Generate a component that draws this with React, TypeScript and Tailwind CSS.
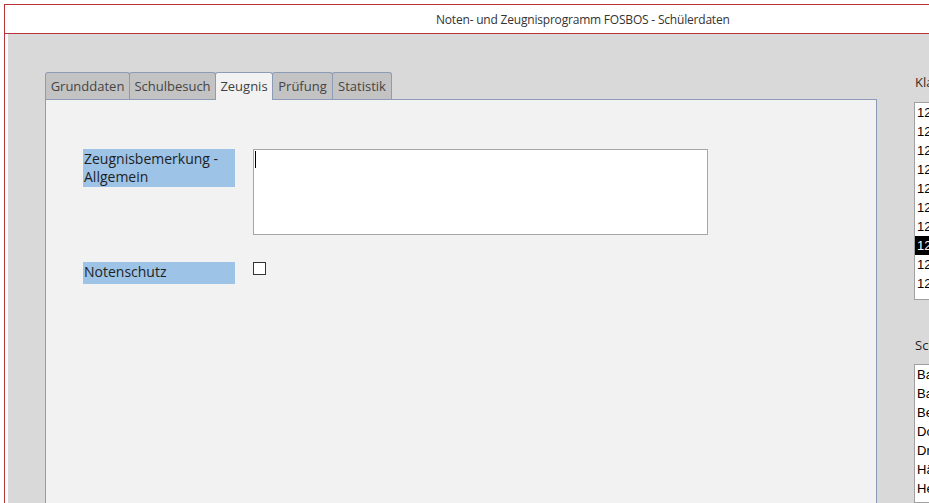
import React from "react";

const tabs = [
  { label: "Grunddaten", w: "w-[85px]", active: false },
  { label: "Schulbesuch", w: "w-[87px]", active: false },
  { label: "Zeugnis", w: "w-[58px]", active: true },
  { label: "Prüfung", w: "w-[61px]", active: false },
  { label: "Statistik", w: "w-[60px]", active: false },
];

const klassen = ["12A", "12B", "12C", "12D", "12E", "12F", "12G", "12H", "12I", "12K"];
const schueler = ["Bauer, Anna", "Baumann, Lukas", "Berger, Tim", "Dorn, Lea", "Dreher, Max", "Häusler, Jana", "Hertel, Paul"];

export default function App() {
  return (
    <div className="w-[929px] h-[503px] overflow-hidden bg-white pt-[4px] pl-[4px] font-['Open_Sans',sans-serif]">
      <div className="flex flex-col h-[499px] w-[1200px] border-t border-l border-[#b8333a]">
        {/* title bar */}
        <div className="h-[29px] shrink-0 border-b border-[#b8333a] flex items-center pl-[431px] pt-[1px] text-[12px] text-[#333333] tracking-[-0.2px]">
          Noten- und Zeugnisprogramm FOSBOS - Schülerdaten
        </div>
        {/* body */}
        <div className="flex-1 flex pl-[3px] bg-white min-h-0">
          <div className="flex-1 flex bg-[#d9d9d9] min-h-0">
            {/* left: tab control */}
            <div className="ml-[37px] w-[832px] flex flex-col pt-[38px]">
              <div className="flex h-[27px] shrink-0 relative z-10">
                {tabs.map((t, i) => (
                  <div
                    key={t.label}
                    className={
                      (t.active
                        ? "bg-[#f2f2f2] h-[28px] text-[#404040] "
                        : "bg-[#c3c3c3] h-[27px] text-[#454545] ") +
                      t.w +
                      (i > 0 ? " -ml-[1px]" : "") +
                      " border border-b-0 border-[#8d9cb6] rounded-t-[3px] flex items-center justify-center text-[13px] pt-[1px]"
                    }
                  >
                    {t.label}
                  </div>
                ))}
              </div>
              <div className="flex-1 bg-[#f2f2f2] border border-b-0 border-[#8d9cb6] pl-[37px] pt-[49px]">
                <div className="flex gap-[18px]">
                  <div className="w-[152px] h-[38px] bg-[#9dc3e6] text-[14px] leading-[18px] text-[#1f1f1f] pl-[1px] pt-[1px]">
                    Zeugnisbemerkung -<br />Allgemein
                  </div>
                  <div className="w-[455px] h-[86px] bg-white border border-[#a6a6a6] pl-[1px] pt-[1px]">
                    <div className="w-[1px] h-[17px] bg-black" />
                  </div>
                </div>
                <div className="flex gap-[18px] mt-[27px]">
                  <div className="w-[152px] h-[22px] bg-[#9dc3e6] text-[14px] leading-[20px] text-[#1f1f1f] pl-[1px]">
                    Notenschutz
                  </div>
                  <div className="w-[13px] h-[13px] bg-white border border-[#333333]" />
                </div>
              </div>
            </div>
            {/* right column */}
            <div className="ml-[37px] w-[200px] flex flex-col pt-[39px] text-[13px]">
              <div className="h-[18px] leading-[18px] pl-[1px] text-[#3a2e1e]">Klasse</div>
              <div className="mt-[11px] h-[198px] bg-white border border-[#a0a0a0] font-['Liberation_Sans',sans-serif]">
                {klassen.map((k, i) => (
                  <div
                    key={k}
                    className={
                      (i === 7 ? "bg-black text-white " : "text-black ") +
                      "h-[19px] leading-[19px] pl-[2px] text-[13px]"
                    }
                  >
                    {k}
                  </div>
                ))}
              </div>
              <div className="mt-[36px] h-[18px] leading-[18px] pl-[1px] text-[#1e1e1e]">Schüler</div>
              <div className="mt-[10px] flex-1 bg-white border border-[#a0a0a0] font-['Liberation_Sans',sans-serif]">
                {schueler.map((s) => (
                  <div key={s} className="h-[19px] leading-[19px] pl-[2px] text-[13px] text-black">
                    {s}
                  </div>
                ))}
              </div>
            </div>
          </div>
        </div>
      </div>
    </div>
  );
}
